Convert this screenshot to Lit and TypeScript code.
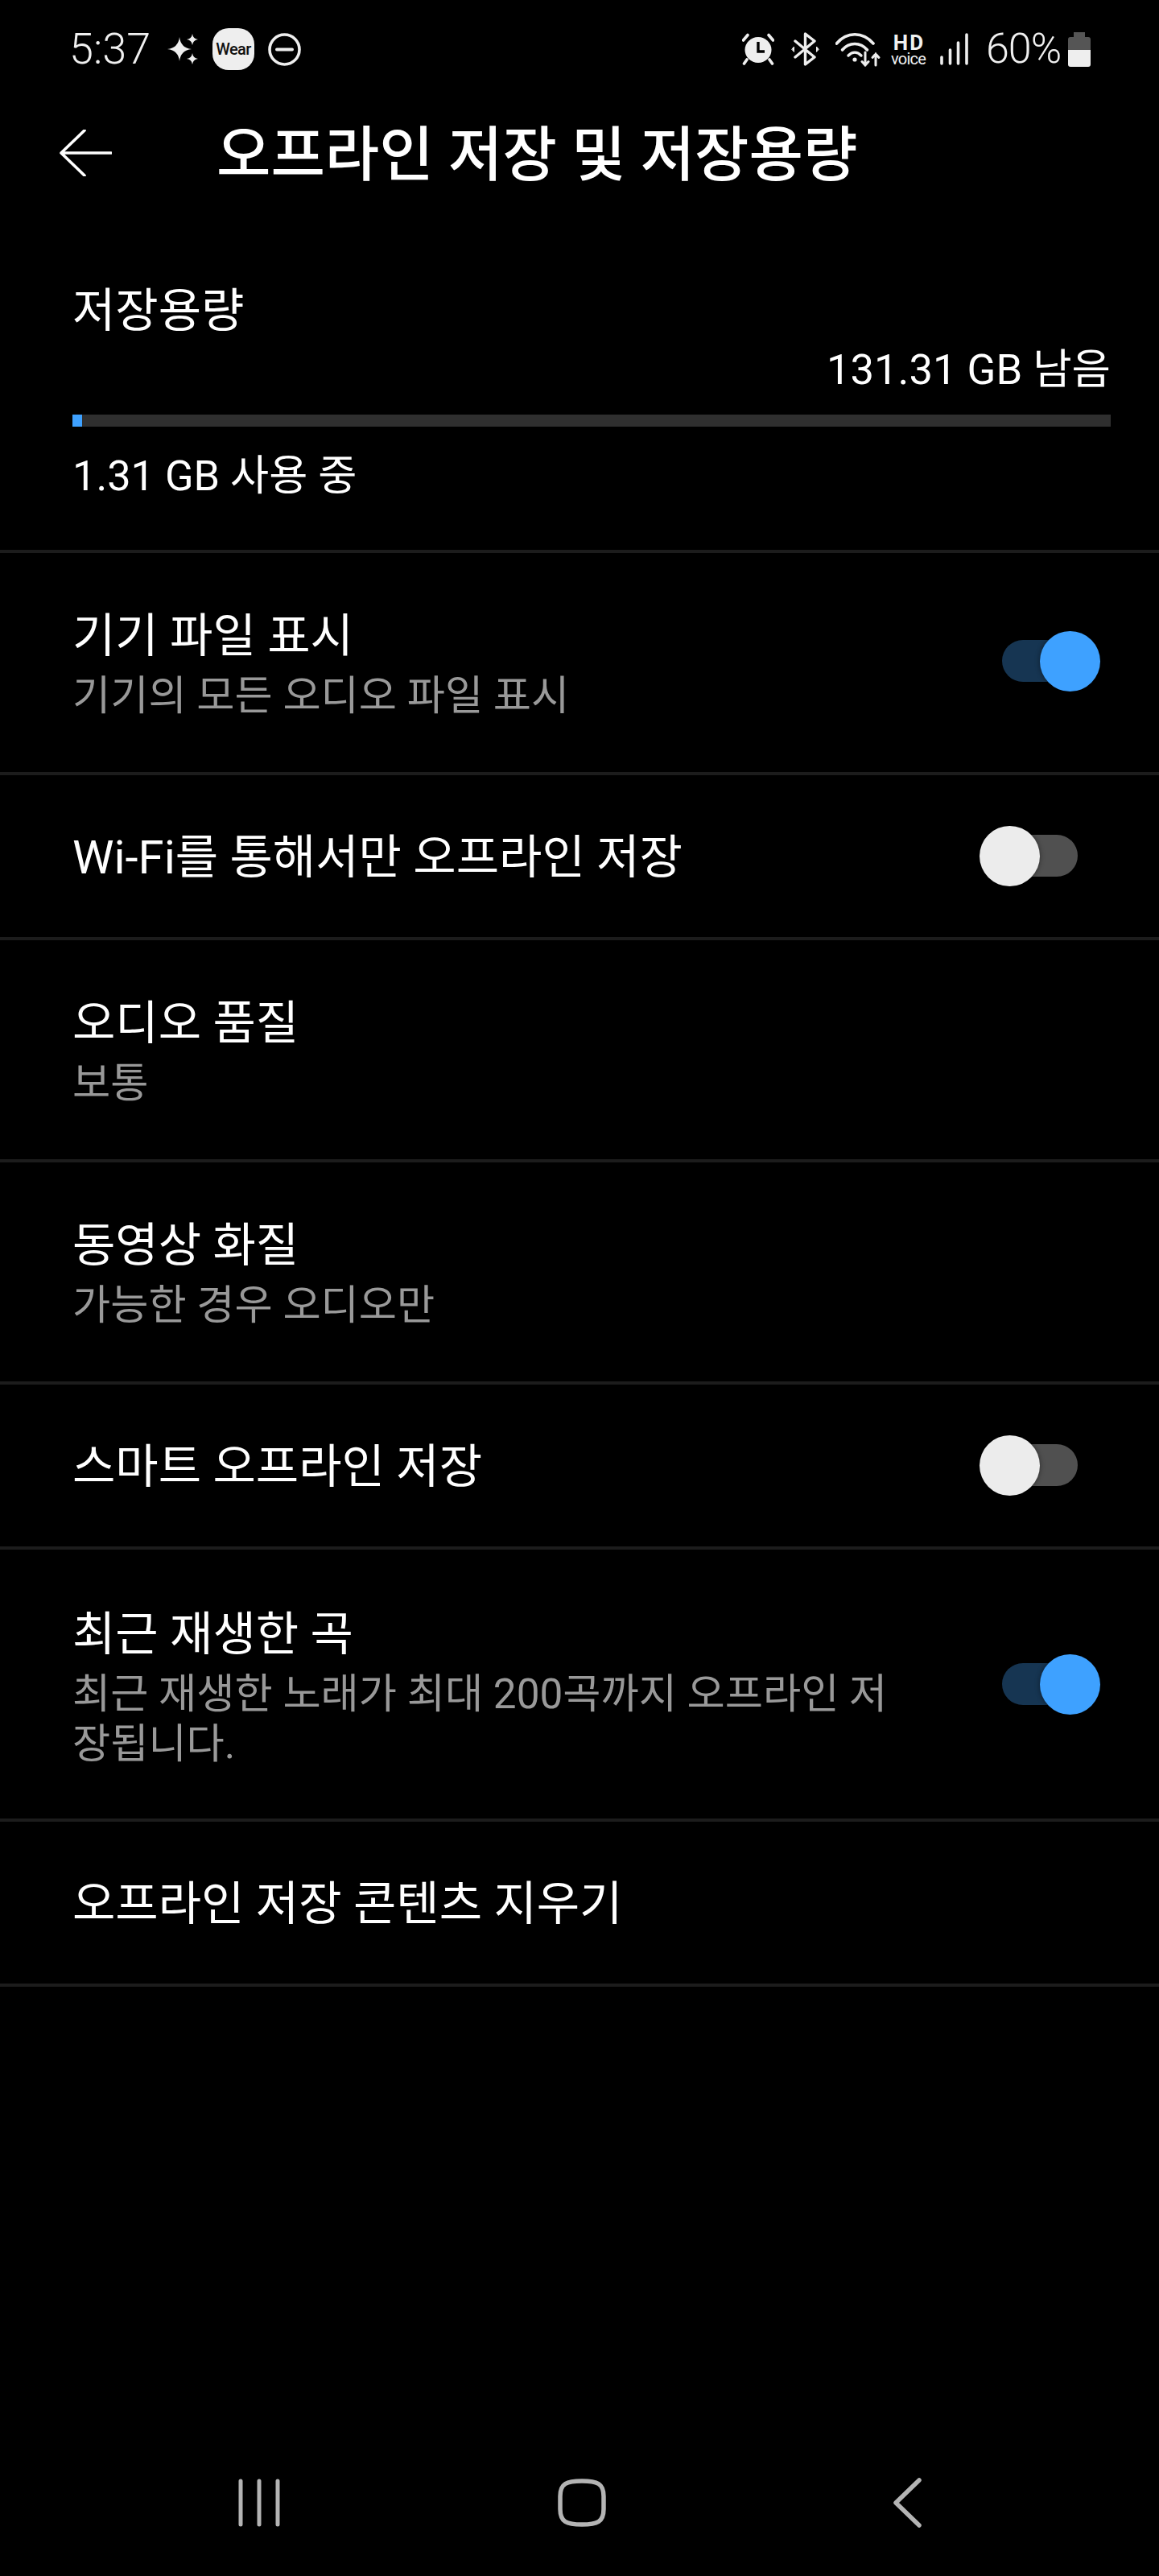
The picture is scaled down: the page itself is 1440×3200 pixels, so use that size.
import { LitElement, html, css, svg } from "lit";
import { customElement, property } from "lit/decorators.js";

@customElement("app-toggle")
export class AppToggle extends LitElement {
  @property({ type: Boolean, reflect: true }) on = false;
  static styles = css`
    :host { display: block; position: relative; width: 150px; height: 75px; flex: none; }
    .track { position: absolute; left: 28px; top: 11px; width: 94px; height: 52px; border-radius: 26px; background: #505050; }
    .thumb { position: absolute; left: 0; top: 0; width: 75px; height: 75px; border-radius: 50%; background: #ececec; box-shadow: 0 0 6px rgba(0,0,0,.45); }
    :host([on]) .track { background: #163552; }
    :host([on]) .thumb { left: 75px; background: #3ea1ff; }
  `;
  render() { return html`<div class="track"></div><div class="thumb"></div>`; }
}

const sparkle = svg`<svg width="40" height="38" viewBox="0 0 40 38" fill="#eee">
  <path d="M16 4 Q17.5 17.5 31 19 Q17.5 20.5 16 34 Q14.5 20.5 1 19 Q14.5 17.5 16 4Z"/>
  <path d="M32 0 Q32.8 6.2 39 7 Q32.8 7.8 32 14 Q31.2 7.8 25 7 Q31.2 6.2 32 0Z"/>
  <path d="M32 24 Q32.8 30.2 39 31 Q32.8 31.8 32 38 Q31.2 31.8 25 31 Q31.2 30.2 32 24Z"/>
</svg>`;

const dnd = svg`<svg width="41" height="41" viewBox="0 0 41 41" fill="none" stroke="#eee">
  <circle cx="20.5" cy="20.5" r="18.5" stroke-width="3.6"/>
  <path d="M11 20.5H30" stroke-width="4" stroke-linecap="round"/>
</svg>`;

const alarm = svg`<svg width="40" height="40" viewBox="0 0 40 40">
  <ellipse cx="20" cy="21" rx="16.5" ry="16" fill="#eee"/>
  <path d="M1.5 9 L7 2.5 M38.5 9 L33 2.5 M6 33 L2.5 38 M34 33 L37.5 38" stroke="#eee" stroke-width="3.6" stroke-linecap="round"/>
  <path d="M20 11 V23 H28" fill="none" stroke="#000" stroke-width="3.4"/>
</svg>`;

const bluetooth = svg`<svg width="35" height="42" viewBox="0 0 35 42" fill="none" stroke="#eee" stroke-width="3.4" stroke-linejoin="round" stroke-linecap="round">
  <path d="M5 11 L29 31 L17.5 40 V2 L29 11 L5 31"/>
  <path d="M1 21 L3.5 18 V24Z M34 21 L31.5 18 V24Z" fill="#eee" stroke-width="1"/>
</svg>`;

const wifi = svg`<svg width="58" height="44" viewBox="0 0 58 44" fill="none" stroke="#eee" stroke-linecap="round">
  <path d="M1.5 15 C14 0 34 0 47 15" stroke-width="3.6"/>
  <path d="M8.5 23 C17 13 31 13 39.5 23" stroke-width="3.6"/>
  <path d="M16 30 C21 25 27 25 32 30" stroke-width="3.4"/>
  <circle cx="24" cy="35" r="2.6" fill="#eee" stroke="none"/>
  <path d="M37 26 V42 M33 37.5 L37 42 L41 37.5" stroke-width="3"/>
  <path d="M50 42 V28 M46 32.5 L50 28 L54 32.5" stroke-width="3"/>
</svg>`;

const signal = svg`<svg width="35" height="40" viewBox="0 0 35 40" stroke="#eee" stroke-width="3.6" stroke-linecap="round">
  <path d="M2 30 V38 M12.5 21 V38 M22.5 12 V38 M33 2 V38"/>
</svg>`;

const battery = svg`<svg width="28" height="43" viewBox="0 0 28 43">
  <path d="M7 0 H21 V6 H25 Q28 6 28 9 V22 H0 V9 Q0 6 3 6 H7Z" fill="#555"/>
  <path d="M0 22 H28 V40 Q28 43 25 43 H3 Q0 43 0 40Z" fill="#eee"/>
</svg>`;

const backArrow = svg`<svg class="arrow" width="65" height="58" viewBox="0 0 65 58" fill="none" stroke="#fff" stroke-width="3.6" stroke-linecap="round" stroke-linejoin="round">
  <path d="M31 1 L2 29 L31 57 M2 29 H64" />
</svg>`;

const navBars = svg`<svg width="52" height="60" viewBox="0 0 52 60" stroke="#b4b4b4" stroke-width="5" stroke-linecap="round">
  <path d="M3 3 V57 M26 3 V57 M49 3 V57"/>
</svg>`;
const navHome = svg`<svg width="60" height="60" viewBox="0 0 60 60" fill="none" stroke="#b4b4b4" stroke-width="5.5">
  <path d="M30 3 C49 3 57 6 57 22 V38 C57 54 49 57 30 57 C11 57 3 54 3 38 V22 C3 6 11 3 30 3Z"/>
</svg>`;
const navBack = svg`<svg width="36" height="62" viewBox="0 0 36 62" fill="none" stroke="#b4b4b4" stroke-width="5.5" stroke-linecap="round" stroke-linejoin="round">
  <path d="M32 3 L3 31 L32 59"/>
</svg>`;

@customElement("app-root")
export class AppRoot extends LitElement {
  static styles = css`
    :host { display: flex; flex-direction: column; width: 1440px; height: 3200px; background: #000; color: #fff; font-family: Roboto, "Noto Sans CJK KR", sans-serif; overflow: hidden; }
    svg { display: block; flex: none; }
    .status { height: 52px; margin-top: 35px; display: flex; align-items: center; color: #f0f0f0; padding: 0 85px 0 86px; }
    .left { display: flex; align-items: center; gap: 17px; }
    .right { display: flex; align-items: center; margin-left: auto; }
    .time { font-size: 54px; line-height: 52px; font-weight: 300; width: 104px; }
    .wear { width: 52px; height: 52px; border-radius: 20px; background: #eee; color: #111; display: flex; align-items: center; justify-content: center; font-size: 20px; font-weight: 500; letter-spacing: -0.6px; }
    .ml10 { margin-left: 10px; } .ml11 { margin-left: 11px; } .ml18 { margin-left: 18px; } .ml20 { margin-left: 20px; } .ml21 { margin-left: 21px; } .ml22 { margin-left: 22px; }
    .hd { width: 43px; display: flex; flex-direction: column; align-items: center; line-height: 1; }
    .hd b { font-size: 26px; line-height: 24px; font-weight: 700; letter-spacing: 2px; margin-right: -2px; }
    .hd span { font-size: 20px; line-height: 17px; font-weight: 400; letter-spacing: -0.8px; white-space: nowrap; }
    .pct { font-size: 52px; line-height: 52px; font-weight: 300; width: 92px; letter-spacing: -1px; white-space: nowrap; }
    .header { height: 130px; margin-top: 41px; display: flex; align-items: center; padding-left: 74px; }
    .arrow { margin-bottom: 6px; }
    .title { font-size: 73.3px; font-weight: 500; margin-left: 130px; line-height: 100px; white-space: nowrap; }
    .storage { padding: 93px 60px 62px 90px; }
    .label { font-size: 58px; line-height: 70px; }
    .remain { font-size: 52.6px; line-height: 60px; text-align: right; margin-top: 8px; }
    .bar { height: 15px; background: #2f2f2f; margin-top: 26px; }
    .fill { width: 12px; height: 100%; background: #3ea1ff; }
    .used { font-size: 52.3px; line-height: 60px; margin-top: 31px; }
    .row { border-top: 4px solid #1c1c1c; display: flex; align-items: center; padding: 0 73px 0 90px; }
    .row.two { height: 268px; padding-bottom: 4px; }
    .row.one { height: 201px; }
    .row.one .t { padding-top: 2px; }
    .row.three { height: 334px; }
    .row.last { border-bottom: 4px solid #1c1c1c; }
    .texts { flex: 1; min-width: 0; margin-right: 100px; }
    .t { font-size: 58px; line-height: 88px; white-space: nowrap; }
    .s { font-size: 51.3px; line-height: 62px; color: #999; word-break: break-all; }
    .nav { margin-top: auto; height: 62px; margin-bottom: 60px; display: flex; align-items: center; }
    .nb { margin-left: 296px; } .nh { margin-left: 345px; } .nk { margin-left: 357px; }
  `;

  private row(cls: string, title: string, sub: string | null, toggle: boolean | null) {
    return html`<div class="row ${cls}">
      <div class="texts">
        <div class="t">${title}</div>
        ${sub ? html`<div class="s">${sub}</div>` : null}
      </div>
      ${toggle === null ? null : html`<app-toggle ?on=${toggle}></app-toggle>`}
    </div>`;
  }

  render() {
    return html`
      <div class="status">
        <div class="left">
          <div class="time">5:37</div>
          ${sparkle}
          <div class="wear">Wear</div>
          ${dnd}
        </div>
        <div class="right">
          ${alarm}
          <div class="ml21">${bluetooth}</div>
          <div class="ml20">${wifi}</div>
          <div class="hd ml11"><b>HD</b><span>voice</span></div>
          <div class="ml18">${signal}</div>
          <div class="pct ml22">60%</div>
          <div class="ml10">${battery}</div>
        </div>
      </div>
      <div class="header">
        ${backArrow}
        <div class="title">오프라인 저장 및 저장용량</div>
      </div>
      <div class="storage">
        <div class="label">저장용량</div>
        <div class="remain">131.31 GB 남음</div>
        <div class="bar"><div class="fill"></div></div>
        <div class="used">1.31 GB 사용 중</div>
      </div>
      ${this.row("two", "기기 파일 표시", "기기의 모든 오디오 파일 표시", true)}
      ${this.row("one", "Wi-Fi를 통해서만 오프라인 저장", null, false)}
      ${this.row("two", "오디오 품질", "보통", null)}
      ${this.row("two", "동영상 화질", "가능한 경우 오디오만", null)}
      ${this.row("one", "스마트 오프라인 저장", null, false)}
      ${this.row("three", "최근 재생한 곡", "최근 재생한 노래가 최대 200곡까지 오프라인 저장됩니다.", true)}
      ${this.row("one last", "오프라인 저장 콘텐츠 지우기", null, null)}
      <div class="nav">
        <div class="nb">${navBars}</div>
        <div class="nh">${navHome}</div>
        <div class="nk">${navBack}</div>
      </div>
    `;
  }
}
